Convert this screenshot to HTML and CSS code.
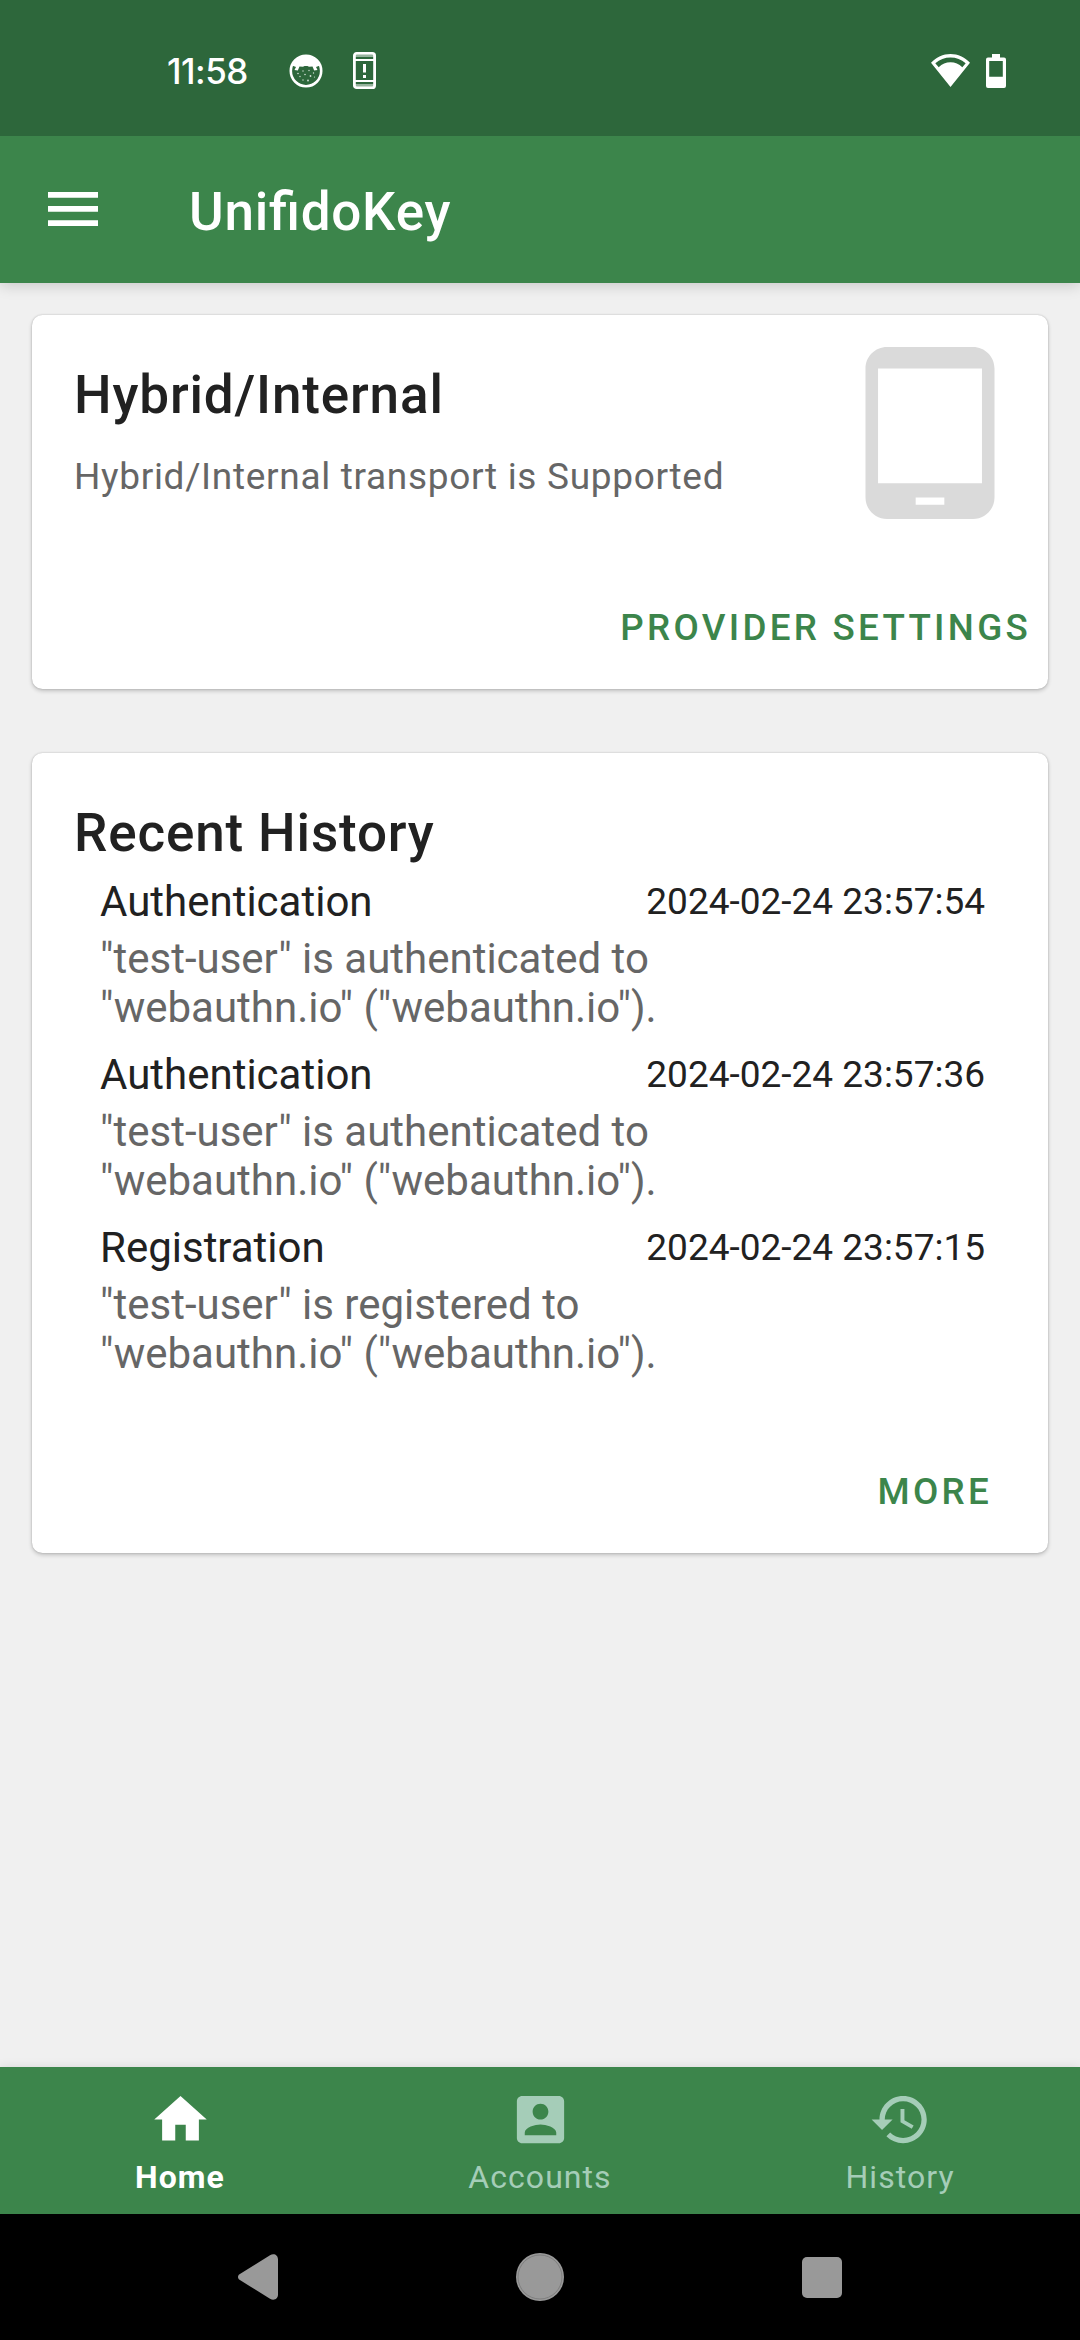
FILE: index.html
```html
<!DOCTYPE html>
<html lang="en">
<head>
<meta charset="utf-8">
<title>UnifidoKey</title>
<link rel="stylesheet" href="styles.css">
</head>
<body>
<div class="status-bar">
  <span class="clock">11:58</span>
  <svg class="icon-cat" width="34" height="34" viewBox="0 0 34 34">
    <circle cx="17" cy="17" r="15.200" fill="none" stroke="#fff" stroke-width="2.600"/>
    <path fill="#fff" d="M3 11.500C6 4 11 1 17 1s11 3 14 10.500L27 13l1.500 3-3.300.5-1.700-4-3.500.3-1.500-.8h-3l-1.500.8-3.500-.3-1.700 4-3.300-.5L7 13z"/>
    <g fill="#d5e2d8"><circle cx="9" cy="19.500" r=".8"/><circle cx="14" cy="17" r=".7"/><circle cx="20" cy="16.500" r=".7"/><circle cx="24.500" cy="19" r=".7"/><circle cx="11" cy="22.500" r=".7"/><circle cx="16" cy="20.500" r=".8"/><circle cx="21.500" cy="22" r=".9"/><circle cx="19" cy="26.500" r=".9"/><circle cx="14" cy="26" r=".7"/><circle cx="25.500" cy="23" r=".6"/></g>
  </svg>
  <svg class="icon-alert" width="23" height="37" viewBox="0 0 23 37">
    <rect x="1.400" y="1.400" width="20.200" height="34.200" rx="2.200" fill="none" stroke="#fff" stroke-width="2.800"/>
    <path fill="#fff" d="M2 3.500h19v1H2zM2 7h19v2H2zM2 28h19v2H2zM2 32.500h19v1H2zM10 12h3v8.600h-3zM10 23h3v3h-3z"/>
  </svg>
  <span class="spacer"></span>
  <svg class="icon-wifi" width="39" height="33" viewBox="0 0 39 33">
    <path fill="#fff" fill-rule="evenodd" d="M0 8.800C5.500 3 12 0 19.500 0S33.500 3 39 8.800L19.500 33zM4.300 9.200l3.400 4C11 10 15 8.300 19.500 8.300S28 10 31.300 13.200l3.400-4C30.200 5.300 25.300 3.400 19.500 3.400S8.800 5.300 4.300 9.200z"/>
  </svg>
  <svg class="icon-battery" width="20" height="34" viewBox="0 0 20 34">
    <path fill="#fff" fill-rule="evenodd" d="M6 0h8v3.500h4a2 2 0 0 1 2 2V32a2 2 0 0 1-2 2H2a2 2 0 0 1-2-2V5.500a2 2 0 0 1 2-2h4zM3.200 7v15.700h13.600V7z"/>
  </svg>
</div>
<header class="app-bar">
  <svg class="menu" width="50" height="34" viewBox="0 0 50 34"><path fill="#fff" d="M0 0h50v5.700H0zM0 14h50v5.700H0zM0 28.200h50v5.700H0z"/></svg>
  <h1 class="app-title">UnifidoKey</h1>
</header>
<main class="content">
  <section class="card card-transport">
    <div class="transport-row">
      <div class="transport-text">
        <h2 class="card-title">Hybrid/Internal</h2>
        <p class="card-subtitle">Hybrid/Internal transport is Supported</p>
      </div>
      <svg class="tablet" width="172" height="172" viewBox="0 0 24 24"><path fill="#dadada" d="M18 0H6C4.340 0 3 1.340 3 3v18c0 1.660 1.340 3 3 3h12c1.660 0 3-1.340 3-3V3c0-1.660-1.340-3-3-3zm-4 22h-4v-1h4v1zm5.250-3H4.750V3h14.500v16z"/></svg>
    </div>
    <a class="action action-provider">PROVIDER SETTINGS</a>
  </section>
  <section class="card card-history">
    <h2 class="card-title">Recent History</h2>
    <ul class="history">
      <li class="entry">
        <div class="entry-head"><span class="entry-type">Authentication</span><time class="entry-time">2024-02-24 23:57:54</time></div>
        <p class="entry-text">"test-user" is authenticated to<br>"webauthn.io" ("webauthn.io").</p>
      </li>
      <li class="entry">
        <div class="entry-head"><span class="entry-type">Authentication</span><time class="entry-time">2024-02-24 23:57:36</time></div>
        <p class="entry-text">"test-user" is authenticated to<br>"webauthn.io" ("webauthn.io").</p>
      </li>
      <li class="entry">
        <div class="entry-head"><span class="entry-type">Registration</span><time class="entry-time">2024-02-24 23:57:15</time></div>
        <p class="entry-text">"test-user" is registered to<br>"webauthn.io" ("webauthn.io").</p>
      </li>
    </ul>
    <a class="action action-more">MORE</a>
  </section>
</main>
<nav class="tabs">
  <a class="tab tab-active">
    <svg width="63" height="63" viewBox="0 0 24 24"><path fill="currentColor" d="M10 20v-6h4v6h5v-8h3L12 3 2 12h3v8z"/></svg>
    <span>Home</span>
  </a>
  <a class="tab">
    <svg width="63" height="63" viewBox="0 0 24 24"><path fill="currentColor" d="M3 5v14c0 1.100.89 2 2 2h14c1.100 0 2-.9 2-2V5c0-1.100-.9-2-2-2H5c-1.110 0-2 .9-2 2zm12 4c0 1.660-1.340 3-3 3s-3-1.340-3-3 1.340-3 3-3 3 1.340 3 3zm-9 8c0-2 4-3.100 6-3.100s6 1.100 6 3.100v1H6v-1z"/></svg>
    <span>Accounts</span>
  </a>
  <a class="tab">
    <svg width="63" height="63" viewBox="0 0 24 24"><path fill="currentColor" d="M13 3c-4.970 0-9 4.030-9 9H1l3.890 3.890.07.14L9 12H6c0-3.870 3.130-7 7-7s7 3.130 7 7-3.130 7-7 7c-1.930 0-3.680-.79-4.940-2.060l-1.420 1.420C8.270 19.990 10.510 21 13 21c4.970 0 9-4.030 9-9s-4.030-9-9-9zm-1 5v5l4.280 2.540.72-1.210-3.500-2.080V8H12z"/></svg>
    <span>History</span>
  </a>
</nav>
<footer class="system-nav">
  <svg width="40" height="46" viewBox="0 0 40 46"><path fill="#999" d="M1.500 20.200 32 1.200C36-1 40 1 40 5.500v35c0 4.500-4 6.500-8 4.300L1.500 25.800c-2-1.300-2-4.300 0-5.600z"/></svg>
  <svg width="48" height="48" viewBox="0 0 48 48"><circle cx="24" cy="24" r="24" fill="#999"/><circle cx="24" cy="24" r="22" fill="none" stroke="#777" stroke-width=".8"/></svg>
  <svg width="40" height="41" viewBox="0 0 40 41"><rect width="40" height="41" rx="5" fill="#999"/></svg>
</footer>
</body>
</html>
```
FILE: styles.css
```css
* { box-sizing: border-box; margin: 0; padding: 0; }
body {
  width: 1080px;
  height: 2340px;
  display: flex;
  flex-direction: column;
  background: #f0f0f0;
  color: #212121;
  font-family: Roboto, "Liberation Sans", sans-serif;
  overflow: hidden;
}
svg { display: block; flex: none; }

.status-bar {
  height: 136px;
  background: #2d673b;
  color: #fff;
  display: flex;
  align-items: center;
  padding: 5px 74px 0 167px;
  position: relative;
  z-index: 2;
}
.clock { width: 122px; font: 500 35px/42px Inter, Roboto, sans-serif; letter-spacing: -0.5px; }
.icon-alert { margin-left: 30px; }
.spacer { flex: 1; }
.icon-battery { margin-left: 16px; }

.app-bar {
  height: 147px;
  background: #3c854b;
  color: #fff;
  display: flex;
  align-items: center;
  padding-left: 48px;
  box-shadow: 0 2px 14px rgba(0, 0, 0, 0.18);
  z-index: 1;
}
.menu { margin-top: -1px; }
.app-title {
  margin: 5px 0 0 91px;
  font-size: 53px;
  line-height: 62px;
  font-weight: 500;
  letter-spacing: 0.75px;
  font-feature-settings: "liga" 1;
}

.content {
  flex: 1;
  padding: 32px 32px 0;
  display: flex;
  flex-direction: column;
  gap: 64px;
}
.card {
  background: #fff;
  border-radius: 10.5px;
  box-shadow: 0 0 2px rgba(0, 0, 0, 0.2), 0 2px 4px rgba(0, 0, 0, 0.2);
  display: flex;
  flex-direction: column;
  align-items: stretch;
}
.card-title { font-size: 53px; line-height: 62px; font-weight: 500; letter-spacing: 0.85px; }
.card-transport { height: 374px; }
.transport-row {
  display: flex;
  justify-content: space-between;
  padding: 32px 32px 0 42px;
}
.transport-text { padding-top: 17px; }
.card-subtitle {
  margin-top: 29px;
  font-size: 37px;
  line-height: 43px;
  letter-spacing: 0.68px;
  color: #666;
}
.action {
  align-self: flex-end;
  font-size: 36.75px;
  line-height: 44px;
  font-weight: 500;
  letter-spacing: 3.28px;
  color: #3c854b;
}
.action-provider { margin: 87px 17px 0 0; }

.card-history { height: 800px; padding: 49px 0 0 42px; }
.history { list-style: none; padding: 13px 63px 0 26px; }
.entry { height: 173px; }
.entry-head { display: flex; justify-content: space-between; font-size: 42px; line-height: 49px; }
.entry-time { font-size: 37px; line-height: 50px; height: 49px; }
.entry-text { margin-top: 8px; font-size: 42px; line-height: 49px; color: #666; }
.action-more { margin: 74px 56px 0 0; }

.tabs {
  height: 147px;
  background: #3c854b;
  color: #a5cdb8;
  display: grid;
  grid-template-columns: repeat(3, 1fr);
  box-shadow: 0 0 10px rgba(0, 0, 0, 0.1);
}
.tab {
  display: flex;
  flex-direction: column;
  align-items: center;
  padding-top: 21px;
  font-size: 32px;
  line-height: 37px;
  letter-spacing: 1.05px;
}
.tab span { margin-top: 8px; }
.tab-active { color: #fff; font-weight: 700; }

.system-nav {
  height: 126px;
  background: #000;
  display: flex;
  align-items: center;
  justify-content: space-between;
  padding: 0 238px;
}
```
